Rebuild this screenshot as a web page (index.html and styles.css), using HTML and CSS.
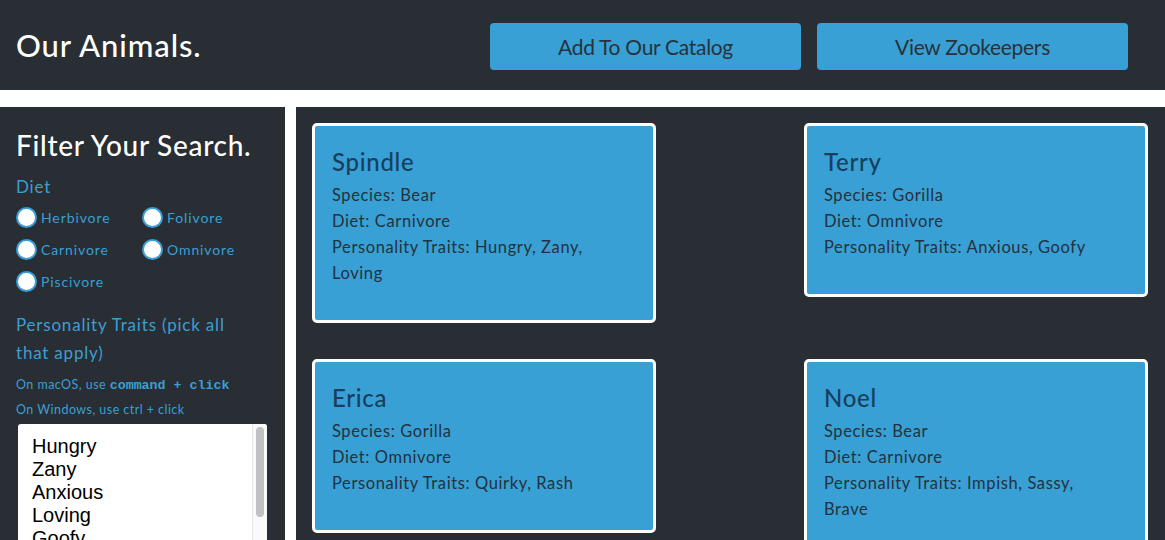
FILE: index.html
```html
<!DOCTYPE html>
<html lang="en">
<head>
<meta charset="utf-8">
<title>Our Animals</title>
<link rel="stylesheet" href="styles.css">
</head>
<body>
<header class="topbar">
  <h1 class="brand">Our Animals.</h1>
  <nav class="actions">
    <a class="btn" href="#">Add To Our Catalog</a>
    <a class="btn" href="#">View Zookeepers</a>
  </nav>
</header>
<div class="layout">
  <aside class="sidebar">
    <h2 class="side-title">Filter Your Search.</h2>
    <div class="label">Diet</div>
    <div class="radios">
      <label class="radio"><input type="radio" name="diet"><span>Herbivore</span></label>
      <label class="radio"><input type="radio" name="diet"><span>Folivore</span></label>
      <label class="radio"><input type="radio" name="diet"><span>Carnivore</span></label>
      <label class="radio"><input type="radio" name="diet"><span>Omnivore</span></label>
      <label class="radio"><input type="radio" name="diet"><span>Piscivore</span></label>
    </div>
    <div class="label traits">Personality Traits (pick all that apply)</div>
    <p class="hint first">On macOS, use <code>command + click</code></p>
    <p class="hint">On Windows, use ctrl + click</p>
    <div class="picker">
      <ul class="options" role="listbox" aria-multiselectable="true">
        <li role="option">Hungry</li>
        <li role="option">Zany</li>
        <li role="option">Anxious</li>
        <li role="option">Loving</li>
        <li role="option">Goofy</li>
        <li role="option">Impish</li>
        <li role="option">Sassy</li>
        <li role="option">Brave</li>
        <li role="option">Quirky</li>
        <li role="option">Rash</li>
      </ul>
      <div class="scrollbar"><div class="thumb"></div></div>
    </div>
  </aside>
  <main class="content">
    <article class="card">
      <h3 class="card-name">Spindle</h3>
      <p class="card-line">Species: Bear</p>
      <p class="card-line">Diet: Carnivore</p>
      <p class="card-line">Personality Traits: Hungry, Zany, Loving</p>
    </article>
    <article class="card">
      <h3 class="card-name">Terry</h3>
      <p class="card-line">Species: Gorilla</p>
      <p class="card-line">Diet: Omnivore</p>
      <p class="card-line">Personality Traits: Anxious, Goofy</p>
    </article>
    <article class="card">
      <h3 class="card-name">Erica</h3>
      <p class="card-line">Species: Gorilla</p>
      <p class="card-line">Diet: Omnivore</p>
      <p class="card-line">Personality Traits: Quirky, Rash</p>
    </article>
    <article class="card">
      <h3 class="card-name">Noel</h3>
      <p class="card-line">Species: Bear</p>
      <p class="card-line">Diet: Carnivore</p>
      <p class="card-line">Personality Traits: Impish, Sassy, Brave</p>
    </article>
  </main>
</div>
</body>
</html>
```

FILE: styles.css
```css
* { box-sizing: border-box; }

body {
  margin: 0;
  background: #ffffff;
  font-family: Lato, "Open Sans", sans-serif;
  color: #24323d;
}

.topbar {
  height: 90px;
  background: #282e33;
  display: flex;
  align-items: center;
  justify-content: space-between;
  padding: 0 37px 0 16px;
}

.brand {
  margin: 0;
  font-size: 31px;
  font-weight: 500;
  letter-spacing: 0.9px;
  color: #ffffff;
}

.actions {
  display: flex;
  gap: 16px;
  margin-top: 3px;
}

.btn {
  width: 311px;
  height: 47px;
  display: flex;
  align-items: center;
  justify-content: center;
  background: #38a0d5;
  border-radius: 4px;
  color: #27333c;
  font-size: 21px;
  letter-spacing: -0.3px;
  text-decoration: none;
}

.layout {
  display: flex;
  gap: 11px;
  margin-top: 17px;
}

.sidebar {
  width: 285px;
  flex: none;
  background: #282e33;
  padding: 20px 18px 0 16px;
  height: 440px;
}

.side-title {
  margin: 0;
  font-size: 28px;
  line-height: 36px;
  font-weight: 500;
  letter-spacing: 0.7px;
  color: #ffffff;
}

.label {
  color: #3a9fd5;
  font-size: 17px;
  line-height: 24px;
  letter-spacing: 0.8px;
  margin-top: 12px;
}

.radios {
  display: grid;
  grid-template-columns: 126px 126px;
  grid-auto-rows: 32px;
  margin-top: 2px;
}

.radio {
  display: flex;
  align-items: center;
  gap: 4px;
  color: #3a9fd5;
  font-size: 14px;
  letter-spacing: 0.9px;
}

.radio input {
  appearance: none;
  -webkit-appearance: none;
  margin: 0;
  width: 21px;
  height: 21px;
  border-radius: 50%;
  background: #ffffff;
  border: 2px solid #3a9fd5;
}

.label.traits {
  margin-top: 14px;
  line-height: 28px;
  max-width: 235px;
}

.hint {
  margin: 0;
  color: #3a9fd5;
  font-size: 12.5px;
  line-height: 24px;
  letter-spacing: 0.45px;
}

.hint.first { margin-top: 6px; }

.hint code {
  font-family: "Liberation Mono", monospace;
  font-weight: bold;
  font-size: 13.3px;
  letter-spacing: 0;
}

.picker {
  display: flex;
  margin: 2px 0 0 2px;
  width: 249px;
  height: 150px;
  border-radius: 3px;
  background: #ffffff;
  overflow: hidden;
}

.options {
  flex: 1;
  list-style: none;
  margin: 0;
  padding: 11px 0 0 14px;
  font-family: "Liberation Sans", Arial, sans-serif;
  font-size: 20px;
  line-height: 23px;
  color: #000000;
  overflow: hidden;
}

.scrollbar {
  width: 15px;
  flex: none;
  background: #fafafa;
  border-left: 1px solid #e8e8e8;
  padding: 3px 3px 0 3px;
}

.thumb {
  height: 90px;
  background: #c1c1c1;
  border-radius: 4px;
}

.content {
  flex: 1;
  background: #282e33;
  padding: 16px 17px 16px 16px;
  display: flex;
  flex-wrap: wrap;
  justify-content: space-between;
  align-items: flex-start;
  row-gap: 36px;
}

.card {
  width: 344px;
  background: #38a0d5;
  border: 3px solid #ffffff;
  border-radius: 5px;
  padding: 22px 30px 34px 17px;
}

.card-name {
  margin: 0 0 6px;
  font-size: 24px;
  line-height: 28px;
  font-weight: 500;
  letter-spacing: 0.7px;
  color: #173f5e;
}

.card-line {
  margin: 0;
  font-size: 16.5px;
  line-height: 26px;
  letter-spacing: 0.6px;
  color: #24323d;
}
```
